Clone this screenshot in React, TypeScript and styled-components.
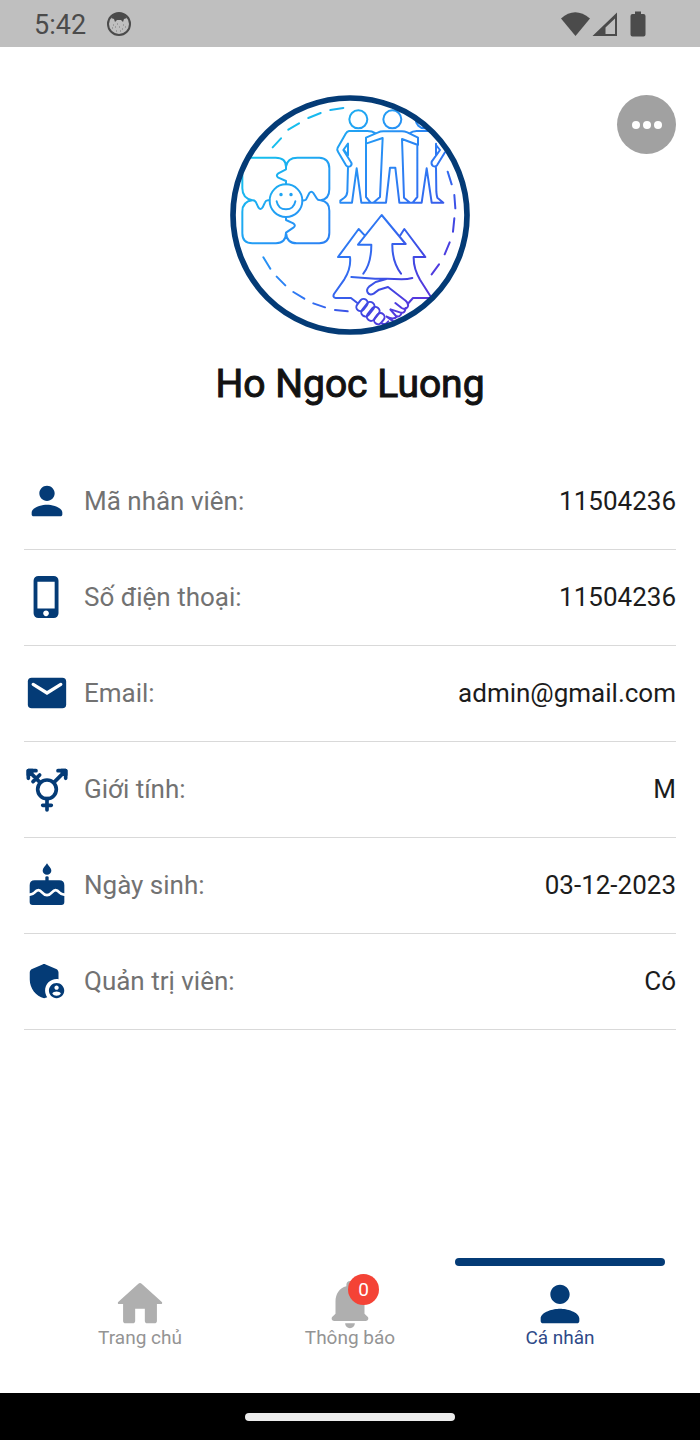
import React from 'react';
import styled, { createGlobalStyle } from 'styled-components';

const NAVY = '#043b76';

const GlobalStyle = createGlobalStyle`
  * {
    box-sizing: border-box;
  }
  body {
    margin: 0;
    background-color: #ffffff;
    font-family: Roboto, 'Liberation Sans', sans-serif;
  }
`;

const StyledScreen = styled.div`
  min-height: 100vh;
  display: flex;
  flex-direction: column;
  background-color: #ffffff;
`;

const StyledStatusBar = styled.header`
  height: 47px;
  padding: 0 54px 0 34px;
  display: flex;
  align-items: center;
  gap: 20px;
  background-color: #bfbfbf;
  color: #4b4b4b;
  .time {
    font-size: 27px;
    line-height: 32px;
    padding-top: 2px;
  }
  .signals {
    margin-left: auto;
    display: flex;
  }
  svg {
    display: block;
  }
`;

const StyledProfile = styled.main`
  flex: 1;
  padding: 48px 24px 24px;
`;

const StyledProfileHeader = styled.div`
  display: grid;
  grid-template-columns: 1fr 240px 1fr;
  align-items: start;
  .avatar {
    grid-column: 2;
    display: block;
    width: 100%;
  }
`;

const MoreButton = styled.button`
  justify-self: end;
  width: 59px;
  height: 59px;
  padding: 0;
  border: none;
  border-radius: 50%;
  background-color: #a1a1a1;
  display: flex;
  align-items: center;
  justify-content: center;
  gap: 3px;
  cursor: pointer;
  span {
    width: 8px;
    height: 8px;
    border-radius: 50%;
    background-color: #ffffff;
  }
`;

const UserName = styled.h1`
  margin: 25px 0 46px;
  font-size: 39px;
  line-height: 48px;
  font-weight: 400;
  -webkit-text-stroke: 1px #121212;
  text-align: center;
  color: #121212;
`;

const InfoList = styled.dl`
  margin: 0;
`;

const InfoRow = styled.div`
  height: 96px;
  padding-bottom: 2px;
  display: flex;
  align-items: center;
  border-bottom: 1px solid #d9d9d9;
  font-size: 26px;
  line-height: 32px;
  svg {
    flex: none;
    margin-right: 14px;
    color: ${NAVY};
  }
  dt {
    color: #727272;
  }
  dd {
    margin: 0 0 0 auto;
    color: #1c1c1c;
  }
`;

const StyledTabBar = styled.nav`
  height: 135px;
  padding: 0 35px;
  display: grid;
  grid-template-columns: repeat(3, 1fr);
`;

const TabButton = styled.button<{ $active?: boolean }>`
  padding: 0;
  border: none;
  background: none;
  font-family: inherit;
  font-size: 19px;
  line-height: 24px;
  color: ${({ $active }) => ($active ? '#2f4a88' : '#949494')};
  display: flex;
  flex-direction: column;
  align-items: center;
  cursor: pointer;
  &::before {
    content: '';
    width: 100%;
    height: 8px;
    border-radius: 4px;
    background-color: ${({ $active }) => ($active ? NAVY : 'transparent')};
  }
  .tab-icon {
    position: relative;
    height: 58px;
    margin: 9px 0 -7px;
    color: ${({ $active }) => ($active ? NAVY : '#afafaf')};
  }
`;

const Badge = styled.span`
  position: absolute;
  top: -1px;
  right: 0;
  width: 31px;
  height: 31px;
  border-radius: 50%;
  background-color: #f44336;
  color: #ffffff;
  line-height: 31px;
  text-align: center;
`;

const StyledSystemBar = styled.footer`
  height: 47px;
  display: flex;
  align-items: center;
  justify-content: center;
  background-color: #000000;
  span {
    width: 30%;
    height: 8px;
    border-radius: 4px;
    background-color: #ececec;
  }
`;

interface IconProps {
  size?: number;
  children: React.ReactNode;
}

const Icon: React.FC<IconProps> = ({ size = 46, children }: IconProps) => (
  <svg width={size} height={size} viewBox="0 0 24 24" fill="currentColor" aria-hidden="true">
    {children}
  </svg>
);

const PersonIcon = ({ size }: { size?: number }) => (
  <Icon size={size}>
    <path d="M12 12c2.21 0 4-1.79 4-4s-1.79-4-4-4-4 1.79-4 4 1.79 4 4 4zm0 2c-2.67 0-8 1.34-8 4v1c0 .55.45 1 1 1h14c.55 0 1-.45 1-1v-1c0-2.66-5.33-4-8-4z" />
  </Icon>
);

const PhoneIcon = () => (
  <Icon>
    <path d="M15.5 1h-8A2.5 2.5 0 0 0 5 3.5v17A2.5 2.5 0 0 0 7.5 23h8a2.5 2.5 0 0 0 2.5-2.5v-17A2.5 2.5 0 0 0 15.5 1zm-4 21c-.83 0-1.5-.67-1.5-1.5s.67-1.5 1.5-1.5 1.5.67 1.5 1.5-.67 1.5-1.5 1.5zm4.5-4H7V4h9v14z" />
  </Icon>
);

const MailIcon = () => (
  <Icon>
    <rect x="2" y="4" width="20" height="16" rx="2" />
    <path d="M4.8 7.5L12 12l7.2-4.5" fill="none" stroke="#ffffff" strokeWidth="1.7" strokeLinecap="round" />
  </Icon>
);

const GenderIcon = () => (
  <svg
    width="46"
    height="46"
    viewBox="0 0 138 138"
    fill="none"
    stroke="currentColor"
    strokeWidth="11"
    strokeLinecap="round"
    strokeLinejoin="round"
    aria-hidden="true"
  >
    <circle cx="69" cy="70" r="28" />
    <path d="M90 49L125 14M102 14h23v23M48 49L13 14M13 37V14h23M27 47l20-20M69 98v34M56 118h26" />
    <path d="M112 14h13v13zM26 14H13v13z" fill="currentColor" />
  </svg>
);

const CakeIcon = () => (
  <svg width="46" height="46" viewBox="0 0 138 138" fill="currentColor" aria-hidden="true">
    <path d="M69 4C74 13 82 18 82 26a13 12 0 0 1-26 0C56 18 64 13 69 4z" />
    <path d="M64 46q0-3 5-3t5 3v9h32q15 0 15 15v50q0 9-9 9H26q-9 0-9-9V70q0-15 15-15h32z" />
    <path
      d="M12 97Q24 100 32 91Q43 78 54 91Q69 108 84 91Q95 78 106 91Q114 100 126 97"
      fill="none"
      stroke="#ffffff"
      strokeWidth="8"
    />
  </svg>
);

const AdminIcon = () => (
  <Icon>
    <path d="M17 11c.34 0 .67.04 1 .09V7.58c0-.8-.47-1.52-1.2-1.83l-5.5-2.4c-.51-.22-1.09-.22-1.6 0l-5.5 2.4C3.47 6.07 3 6.79 3 7.58v3.6c0 4.54 3.2 8.79 7.5 9.82.55-.13 1.08-.32 1.6-.55-.69-.98-1.1-2.17-1.1-3.45 0-3.31 2.69-6 6-6z" />
    <path d="M17 13c-2.21 0-4 1.79-4 4s1.79 4 4 4 4-1.79 4-4-1.79-4-4-4zm0 1.38c.62 0 1.12.51 1.12 1.12s-.51 1.12-1.12 1.12-1.12-.51-1.12-1.12.5-1.12 1.12-1.12zm0 5.37c-.93 0-1.74-.46-2.24-1.17.05-.72 1.51-1.08 2.24-1.08s2.19.36 2.24 1.08c-.5.71-1.31 1.17-2.24 1.17z" />
  </Icon>
);

const HomeIcon = () => (
  <Icon size={58}>
    <path d="M10 19v-5h4v5c0 .55.45 1 1 1h3c.55 0 1-.45 1-1v-7h1.7c.46 0 .68-.57.33-.87L12.67 3.6c-.38-.34-.96-.34-1.34 0l-8.36 7.53c-.34.3-.13.87.33.87H5v7c0 .55.45 1 1 1h3c.55 0 1-.45 1-1z" />
  </Icon>
);

const BellIcon = () => (
  <Icon size={58}>
    <path d="M12 22c1.1 0 2-.9 2-2h-4c0 1.1.89 2 2 2zm6-6v-5c0-3.07-1.64-5.64-4.5-6.32V4c0-.83-.67-1.5-1.5-1.5s-1.5.67-1.5 1.5v.68C7.63 5.36 6 7.92 6 11v5l-1.29 1.29c-.63.63-.19 1.71.7 1.71h13.17c.89 0 1.34-1.08.71-1.71L18 16z" />
  </Icon>
);

const FaceIcon = () => (
  <svg width="26" height="26" viewBox="0 0 26 26" aria-hidden="true">
    <circle cx="13" cy="13" r="11" fill="none" stroke="currentColor" strokeWidth="2" />
    <path d="M5 7Q8 2 13 2T21 7L18 8 17 11 15 9H11L9 11 8 8z" fill="currentColor" />
    <path
      d="M7 14h1M11 13h1M17 14h1M6 17h1M9 16h1M13 16h1M16 18h1M10 20h1M14 20h1M19 16h1"
      stroke="currentColor"
      strokeOpacity="0.6"
    />
  </svg>
);

const SignalIcons = () => (
  <svg width="86" height="28" viewBox="0 0 86 28" fill="currentColor" aria-hidden="true">
    <path d="M1 8.5Q15 -4 30 8.5L15.5 26z" />
    <path d="M57 2.5V26H32.5zM55 8.5L45.5 17.5V24H55z" fillRule="evenodd" />
    <path d="M75 1.5h6V4h2.5q2 0 2 2v18.500q0 2-2 2h-11q-2 0-2-2V6q0-2 2-2H75z" />
  </svg>
);

const Avatar = () => (
  <svg className="avatar" viewBox="0 0 720 720" role="img" aria-label="Ho Ngoc Luong">
    <defs>
      <linearGradient id="teamColors" gradientUnits="userSpaceOnUse" x1="120" y1="120" x2="600" y2="600">
        <stop offset="0" stopColor="#14c4ec" />
        <stop offset="0.33" stopColor="#2597f5" />
        <stop offset="0.65" stopColor="#3070f2" />
        <stop offset="0.85" stopColor="#4046e2" />
        <stop offset="1" stopColor="#5a35dc" />
      </linearGradient>
      <clipPath id="avatarCircle">
        <circle cx="360" cy="360" r="348" />
      </clipPath>
      <mask id="teamLines" maskUnits="userSpaceOnUse" x="0" y="0" width="720" height="720">
        <g fill="none" stroke="#ffffff" strokeWidth="6" strokeLinecap="round" strokeLinejoin="round">
          {/* dashed orbit */}
          <path d="M128 157L153 130M175 104L207 85M235 69L272 54M301 45L340 39M653 230L665 268M673 300L676 340M673 370L669 410M659 442L644 478M627 508L605 538M100 487L121 521M140 545L166 571M190 591L223 611M250 625L285 637M315 645L353 649" />
          {/* puzzle with the smiling face */}
          <g transform="translate(-15 -15)">
            <path d="M70 203H152Q183 203 183 230V238L160 250Q151 256 160 263L183 273V283M183 230Q187 203 217 203H283Q313 205 313 235V298Q313 328 287 331Q278 331 275 325L265 309Q259 301 253 309L243 329Q240 332 233 331M133 331Q123 329 120 337L113 352Q107 362 100 352L93 337Q89 330 82 331Q52 325 52 295V230M82 331Q52 335 52 365V430Q52 460 82 460H153Q183 458 183 428L205 413Q214 406 205 400L183 390V381M183 428Q185 460 215 460H283Q313 458 313 428V362Q313 335 287 331" />
            <circle cx="183" cy="332" r="49" />
            <path d="M155 334Q160 358 183 358T211 334" />
            <path d="M168 313v1M198 313v1" strokeWidth="10" />
          </g>
          {/* three people */}
          <g transform="translate(300 0)">
            <circle cx="85" cy="73" r="27" />
            <circle cx="187" cy="73" r="27" />
            <circle cx="284" cy="73" r="27" />
            <path d="M137 115Q126 108 112 108H57Q51 109 47 116L23 158Q20 164 24 170L48 211Q53 217 60 214Q67 210 64 203L40 165L54 146V181L42 165M54 216L52 290Q51 303 42 309L31 317V323H66L80 220L94 323H122L108 306V128M108 145V128L143 113Q151 109 160 109H216Q224 109 232 112L264 128V150L216 132L222 308L240 323M108 146L158 129L150 306L130 323M122 323H168L180 218H196L208 323H255M238 115Q248 108 260 108H330M262 148V306L248 323H275L290 220L305 323H340L322 308Q320 302 319 290L318 218M318 146V182L330 165L318 150M330 165L305 200Q303 208 309 213Q316 217 321 211L345 172" />
          </g>
          {/* growth arrows */}
          <g transform="translate(285 330)">
            <path d="M115 206Q139 175 139 119H99L170 30L242 117H202Q201 170 228 206M119 91L101 72L39 156H75Q79 190 58 223L27 267Q22 277 32 279H78L98 295M226 91L238 72L301 156H266Q265 190 285 224L316 273M320 279H264L248 297" />
          </g>
          {/* handshake */}
          <g transform="translate(285 495)">
            <path d="M79 51L150 56Q168 57 186 56L230 58Q248 58 262 54M184 57L152 66L132 80Q123 88 128 98Q134 107 146 101L162 89L189 81L242 122Q254 133 247 142Q240 150 230 144L211 129M242 144Q240 161 227 158L197 148M230 158Q226 173 213 168L196 149M216 170Q206 181 185 170M185 170L205 184" />
            <rect x="91" y="123" width="40" height="24" rx="12" transform="rotate(-52 111 135)" />
            <rect x="105" y="135" width="48" height="25" rx="12" transform="rotate(-52 129 148)" />
            <rect x="122" y="149" width="46" height="25" rx="12" transform="rotate(-52 145 162)" />
            <rect x="145" y="164" width="36" height="24" rx="12" transform="rotate(-52 163 176)" />
            <path d="M170 190Q176 194 184 190L190 184" />
          </g>
        </g>
      </mask>
    </defs>
    <g clipPath="url(#avatarCircle)">
      <rect width="720" height="720" fill="url(#teamColors)" mask="url(#teamLines)" />
    </g>
    <circle cx="360" cy="360" r="351" fill="none" stroke={NAVY} strokeWidth="17" />
  </svg>
);

const infos = [
  { icon: <PersonIcon />, label: 'Mã nhân viên:', value: '11504236' },
  { icon: <PhoneIcon />, label: 'Số điện thoại:', value: '11504236' },
  { icon: <MailIcon />, label: 'Email:', value: 'admin@gmail.com' },
  { icon: <GenderIcon />, label: 'Giới tính:', value: 'M' },
  { icon: <CakeIcon />, label: 'Ngày sinh:', value: '03-12-2023' },
  { icon: <AdminIcon />, label: 'Quản trị viên:', value: 'Có' },
];

const App: React.FC = () => {
  return (
    <StyledScreen>
      <GlobalStyle />
      <StyledStatusBar>
        <span className="time">5:42</span>
        <FaceIcon />
        <div className="signals">
          <SignalIcons />
        </div>
      </StyledStatusBar>
      <StyledProfile>
        <StyledProfileHeader>
          <Avatar />
          <MoreButton aria-label="Menu">
            <span />
            <span />
            <span />
          </MoreButton>
        </StyledProfileHeader>
        <UserName>Ho Ngoc Luong</UserName>
        <InfoList>
          {infos.map((info) => (
            <InfoRow key={info.label}>
              {info.icon}
              <dt>{info.label}</dt>
              <dd>{info.value}</dd>
            </InfoRow>
          ))}
        </InfoList>
      </StyledProfile>
      <StyledTabBar>
        <TabButton>
          <span className="tab-icon">
            <HomeIcon />
          </span>
          Trang chủ
        </TabButton>
        <TabButton>
          <span className="tab-icon">
            <BellIcon />
            <Badge>0</Badge>
          </span>
          Thông báo
        </TabButton>
        <TabButton $active aria-current="page">
          <span className="tab-icon">
            <PersonIcon size={58} />
          </span>
          Cá nhân
        </TabButton>
      </StyledTabBar>
      <StyledSystemBar>
        <span />
      </StyledSystemBar>
    </StyledScreen>
  );
};

export default App;
